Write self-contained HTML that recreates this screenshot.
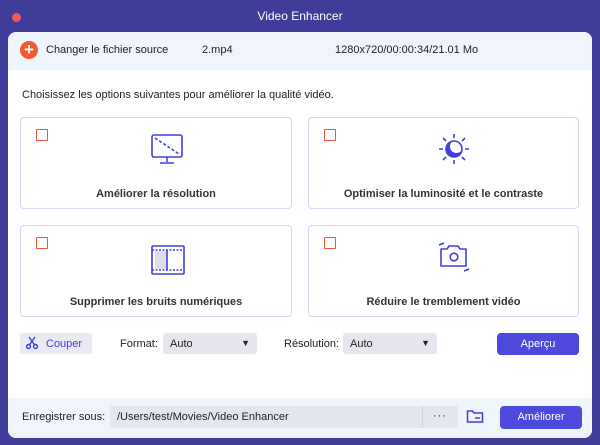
<!DOCTYPE html><html><head><style>
*{margin:0;padding:0;box-sizing:border-box}
body{width:600px;height:445px;background:#3f3c9a;font-family:"Liberation Sans",sans-serif;position:relative;overflow:hidden;font-size:11px;color:#222}
.a{position:absolute}
.title{left:0;top:9px;width:600px;text-align:center;color:#fff;font-size:12px}
.dot{left:12px;top:13px;width:9px;height:9px;border-radius:50%;background:#f25a55}
.panel{left:8px;top:32px;width:584px;height:406px;background:#fff;border-radius:8px;overflow:hidden}
.card{border:1px solid #d5d5fa;border-radius:4px;background:#fff}
.cb{width:12px;height:12px;border:1.5px solid #f0533a;border-radius:1px}
.lab{font-weight:bold;font-size:11px;color:#333;text-align:center}
.sel{background:#e6e6ee;border-radius:3px;height:21px;padding:5px 7px}
.btn{background:#4c49dc;color:#fff;border-radius:4px;text-align:center;font-size:11px}
</style></head><body>
<div class="a dot"></div>
<div class="a title">Video Enhancer</div>
<div class="a panel">
 <div class="a" style="left:0;top:0;width:584px;height:38px;background:#f0f4fb"></div>
 <div class="a" style="left:12px;top:9px;width:18px;height:18px;border-radius:50%;background:#f15a33;color:#fff;font-size:17px;line-height:17px;text-align:center;font-weight:bold">+</div>
 <div class="a" style="left:38px;top:12px">Changer le fichier source</div>
 <div class="a" style="left:194px;top:12px">2.mp4</div>
 <div class="a" style="left:327px;top:12px">1280x720/00:00:34/21.01 Mo</div>
 <div class="a" style="left:14px;top:57px">Choisissez les options suivantes pour améliorer la qualité vidéo.</div>
 <div class="a" style="left:0;top:366px;width:584px;height:40px;background:#f0f4fb"></div>
</div>
<div class="a card" style="left:20px;top:117px;width:272px;height:92px"></div>
<div class="a card" style="left:308px;top:117px;width:271px;height:92px"></div>
<div class="a card" style="left:20px;top:225px;width:272px;height:92px"></div>
<div class="a card" style="left:308px;top:225px;width:271px;height:92px"></div>
<div class="a cb" style="left:36px;top:129px"></div>
<div class="a cb" style="left:324px;top:129px"></div>
<div class="a cb" style="left:36px;top:237px"></div>
<div class="a cb" style="left:324px;top:237px"></div>
<svg class="a" style="left:150px;top:134px" width="36" height="32" viewBox="0 0 36 32" fill="none" stroke="#4040e0" stroke-width="1.6"><rect x="2" y="1" width="30" height="22" rx="2"/><path d="M5 4L29 20" stroke-dasharray="3 2"/><path d="M17 23v5M10 29h14"/></svg>
<svg class="a" style="left:435px;top:131px" width="38" height="36" viewBox="0 0 38 36" fill="none" stroke="#4040e0" stroke-width="1.6"><circle cx="19" cy="18" r="8" fill="#4040e0" stroke="none"/><circle cx="21.5" cy="15.5" r="6.5" fill="#fff" stroke="none"/><circle cx="19" cy="18" r="8"/><path d="M19 3v4M19 29v4M4 18h4M30 18h4M8 7l3 3M30 7l-3 3M8 29l3-3M30 29l-3-3"/></svg>
<svg class="a" style="left:150px;top:244px" width="36" height="34" viewBox="0 0 36 34" fill="none" stroke="#4040e0" stroke-width="1.6"><rect x="2" y="2" width="32" height="28" rx="1"/><path d="M2 6h32M2 26h32" stroke-dasharray="2 1.5"/><rect x="5" y="7" width="12" height="18" fill="#dde" stroke="none"/><path d="M17 6v20"/></svg>
<svg class="a" style="left:434px;top:238px" width="40" height="38" viewBox="0 0 40 38" fill="none" stroke="#4040e0" stroke-width="1.6"><path d="M7 11h6l2-3h9l2 3h6v17H7z" stroke-linejoin="round"/><circle cx="20" cy="19" r="3.8"/><path d="M5 7l5-2M30 33l5-2"/></svg>
<div class="a lab" style="left:20px;top:188px;width:272px">Améliorer la résolution</div>
<div class="a lab" style="left:308px;top:188px;width:271px">Optimiser la luminosité et le contraste</div>
<div class="a lab" style="left:20px;top:296px;width:272px">Supprimer les bruits numériques</div>
<div class="a lab" style="left:308px;top:296px;width:271px">Réduire le tremblement vidéo</div>
<div class="a" style="left:20px;top:333px;width:72px;height:21px;background:#eaeaf4;border-radius:2px;color:#4040e0;padding:5px 0 0 26px">Couper</div>
<svg class="a" style="left:25px;top:336px" width="14" height="14" viewBox="0 0 14 14" fill="none" stroke="#4040e0" stroke-width="1.4"><circle cx="3.5" cy="10.5" r="2"/><circle cx="10.5" cy="10.5" r="2"/><path d="M4.5 8.8L10 1M9.5 8.8L4 1"/></svg>
<div class="a" style="left:120px;top:338px">Format:</div>
<div class="a sel" style="left:163px;top:333px;width:94px">Auto<span style="float:right;font-size:9px">▼</span></div>
<div class="a" style="left:284px;top:338px">Résolution:</div>
<div class="a sel" style="left:343px;top:333px;width:94px">Auto<span style="float:right;font-size:9px">▼</span></div>
<div class="a btn" style="left:497px;top:333px;width:82px;height:22px;line-height:22px">Aperçu</div>
<div class="a" style="left:22px;top:411px">Enregistrer sous:</div>
<div class="a sel" style="left:110px;top:406px;width:348px;height:22px;border-radius:2px;padding-top:5px">/Users/test/Movies/Video Enhancer</div>
<div class="a" style="left:422px;top:406px;width:1px;height:22px;background:#d4d4dc"></div>
<div class="a" style="left:433px;top:410px;letter-spacing:1px">···</div>
<svg class="a" style="left:466px;top:408px" width="18" height="16" viewBox="0 0 18 16" fill="none" stroke="#4040e0" stroke-width="1.5"><path d="M1.5 3h5l1.5 2h8.5v9h-15z"/><path d="M9 10h5"/></svg>
<div class="a btn" style="left:500px;top:406px;width:82px;height:23px;line-height:23px">Améliorer</div>
</body></html>
